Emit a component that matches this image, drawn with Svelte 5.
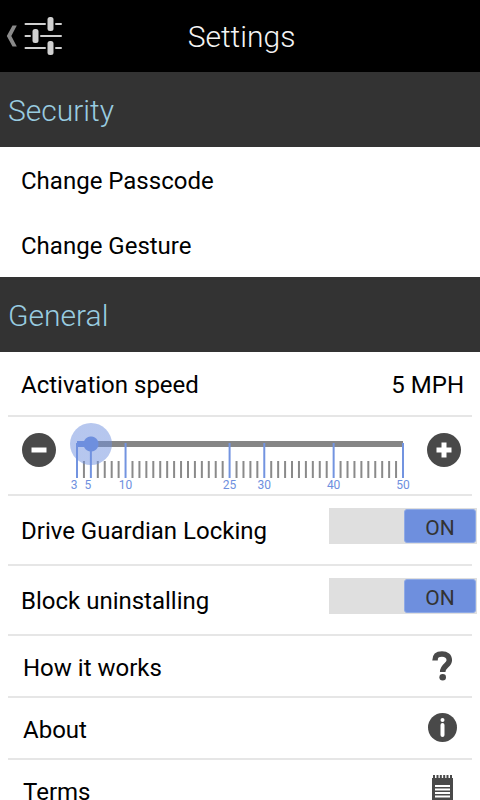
<script lang="ts">
  const min = 3;
  const max = 50;
  const labelled = [3, 5, 10, 25, 30, 40, 50];
  const marks = Array.from({ length: max - min + 1 }, (_, i) => i + min);

  let speed = $state(5);
  let locking = $state(true);
  let blockUninstall = $state(true);

  const percent = (value: number) => ((value - min) / (max - min)) * 100;

  function step(amount: number) {
    speed = Math.min(max, Math.max(min, speed + amount));
  }
</script>

{#snippet toggle(id: string, on: boolean, flip: () => void)}
  <button
    class="toggle"
    class:off={!on}
    type="button"
    role="switch"
    aria-checked={on}
    aria-labelledby={id}
    onclick={flip}
  >
    <span class="knob">{on ? "ON" : "OFF"}</span>
  </button>
{/snippet}

<div class="screen">
  <header>
    <button class="back" type="button" aria-label="Back">
      <svg width="56" height="40" viewBox="0 0 56 40">
        <path d="M6.500 9.500h4.300L5.300 20l5.500 10.500H6.500L.8 20z" fill="#8a8a8a" />
        <g stroke="#d0d0d0" stroke-width="2" stroke-linecap="round">
          <path d="M19.500 8H39M50 8h5M19.500 20H24M35 20h20M19.500 32H39M50 32h5" />
        </g>
        <g fill="#d0d0d0">
          <rect x="41.500" y="1" width="6" height="14" rx="2.500" />
          <rect x="26.500" y="13" width="6" height="14" rx="2.500" />
          <rect x="41.500" y="25" width="6" height="14" rx="2.500" />
        </g>
      </svg>
    </button>
    <h1>Settings</h1>
  </header>

  <main>
    <h2>Security</h2>
    <button class="link" type="button">Change Passcode</button>
    <button class="link" type="button">Change Gesture</button>

    <h2>General</h2>
    <div class="row speed">
      <label for="speed">Activation speed</label>
      <output for="speed">{speed} MPH</output>
    </div>

    <div class="row slider">
      <button class="step" type="button" aria-label="Slower" onclick={() => step(-1)}>
        <svg width="34" height="34" viewBox="0 0 34 34">
          <circle cx="17" cy="17" r="17" fill="#494949" />
          <path d="M9.500 17h15" stroke="#fff" stroke-width="5" />
        </svg>
      </button>
      <div class="scale">
        <svg class="ruler" height="56" aria-hidden="true">
          <rect x="0" y="5" width="100%" height="6" fill="#868686" />
          <rect x="0" y="5" width="{percent(speed)}%" height="6" fill="#6e8fde" />
          {#each marks as mark}
            {#if labelled.includes(mark)}
              <line class="major" x1="{percent(mark)}%" x2="{percent(mark)}%" y1="7" y2="42" />
              <text x="{percent(mark)}%" y="53" dx={mark < 10 ? -3 : 0}>{mark}</text>
            {:else}
              <line class="minor" x1="{percent(mark)}%" x2="{percent(mark)}%" y1="25" y2="42" />
            {/if}
          {/each}
        </svg>
        <input id="speed" type="range" {min} {max} bind:value={speed} />
      </div>
      <button class="step" type="button" aria-label="Faster" onclick={() => step(1)}>
        <svg width="34" height="34" viewBox="0 0 34 34">
          <circle cx="17" cy="17" r="17" fill="#494949" />
          <path d="M9.500 17h15M17 9.500v15" stroke="#fff" stroke-width="5" />
        </svg>
      </button>
    </div>

    <div class="row switch">
      <span id="locking">Drive Guardian Locking</span>
      {@render toggle("locking", locking, () => (locking = !locking))}
    </div>
    <div class="row switch">
      <span id="uninstall">Block uninstalling</span>
      {@render toggle("uninstall", blockUninstall, () => (blockUninstall = !blockUninstall))}
    </div>

    <button class="row info" type="button">
      <span>How it works</span>
      <svg width="30" height="30" viewBox="0 0 30 30">
        <path
          d="M8 9.500C8 4.500 10.500 3 15 3s7.300 2.300 7.300 6.300c0 5.200-6.600 5.200-6.600 11.700"
          fill="none"
          stroke="#494949"
          stroke-width="5.500"
        />
        <circle cx="15.700" cy="26.300" r="3.300" fill="#494949" />
      </svg>
    </button>
    <button class="row info" type="button">
      <span>About</span>
      <svg width="30" height="30" viewBox="0 0 30 30">
        <circle cx="15.500" cy="14.500" r="14.500" fill="#494949" />
        <circle cx="15.500" cy="7" r="2" fill="#fff" />
        <path d="M15.500 12v10" stroke="#fff" stroke-width="4" stroke-linecap="round" />
      </svg>
    </button>
    <button class="row info" type="button">
      <span>Terms</span>
      <svg width="30" height="30" viewBox="0 0 30 30">
        <path d="M5 3h21v26H5z" fill="#494949" />
        <path d="M7 0v3M10.500 0v3M13.800 0v3M17.200 0v3M20.500 0v3M24 0v3" stroke="#494949" stroke-width="2" />
        <path d="M8 11h15M8 14.500h15M8 18h15M8 21.500h15" stroke="#fff" stroke-width="2" />
      </svg>
    </button>
  </main>
</div>

<style>
  :global(body) {
    margin: 0;
    background: #fff;
  }

  .screen {
    display: flex;
    flex-direction: column;
    height: 100vh;
    font-family: Roboto, "Noto Sans", sans-serif;
    font-size: 24px;
    line-height: 32px;
    color: #000;
  }

  button {
    border: 0;
    padding: 0;
    background: none;
    color: inherit;
    font: inherit;
    cursor: pointer;
  }

  svg {
    display: block;
  }

  header {
    display: grid;
    grid-template-columns: 1fr auto 1fr;
    align-items: center;
    flex: none;
    min-height: 72px;
    padding: 0 3px 0 6px;
    box-sizing: border-box;
    background: #000;
    color: #f4f4f4;
  }

  .back {
    justify-self: start;
  }

  h1,
  h2 {
    margin: 0;
    font-size: 30px;
    font-weight: 300;
    line-height: 35px;
  }

  h2 {
    padding: 21px 8px 19px;
    background: #333;
    color: #99cce0;
  }

  main {
    flex: 1;
    min-height: 0;
    overflow-y: auto;
    scrollbar-width: none;
  }

  .link {
    display: block;
    width: 100%;
    padding: 18px 21px 15px;
    text-align: left;
  }

  .row {
    display: flex;
    align-items: center;
    justify-content: space-between;
    margin: 0 8px;
    border-bottom: 2px solid #e6e6e6;
  }

  .speed {
    padding: 17px 8px 14px 13px;
  }

  .slider {
    padding: 8px 11px 8px 14px;
    min-height: 61px;
  }

  .step {
    flex: none;
    margin-bottom: 11px;
  }

  .scale {
    position: relative;
    flex: 1;
    min-width: 0;
    padding: 10px 21px 0;
    margin: 0 3px -7px 0;
  }

  .ruler {
    width: 100%;
    overflow: visible;
  }

  .ruler line {
    stroke-width: 2px;
  }

  .major {
    stroke: #7394e0;
  }

  .minor {
    stroke: #8a8a8a;
  }

  .ruler text {
    fill: #6e8fde;
    font-size: 12px;
    text-anchor: middle;
  }

  input {
    position: absolute;
    top: -3px;
    left: 0;
    width: 100%;
    height: 42px;
    margin: 0;
    appearance: none;
    background: none;
  }

  input::-webkit-slider-thumb {
    appearance: none;
    width: 42px;
    height: 42px;
    border-radius: 50%;
    background: radial-gradient(circle, #6e8fde 7px, rgba(110, 143, 222, 0.5) 8px);
  }

  .switch {
    padding: 12px 0 12px 13px;
  }

  .switch span[id] {
    padding-top: 2px;
  }

  /* The switch reaches past the divider line. */
  .toggle {
    display: flex;
    justify-content: flex-end;
    width: 148px;
    margin: 0 -5px 8px 0;
    padding: 1px;
    box-sizing: border-box;
    background: #dfdfdf;
  }

  .toggle.off {
    justify-content: flex-start;
  }

  .knob {
    width: 70px;
    padding-top: 4px;
    border: 1px solid #8ea9e6;
    border-radius: 3px;
    background: #6e8fde;
    color: #333;
    font-size: 21px;
    line-height: 28px;
  }

  .off .knob {
    background: #bbb;
    border-color: #ccc;
  }

  .info {
    width: calc(100% - 16px);
    padding: 12px 15px;
    text-align: left;
  }

  .info span {
    padding-top: 4px;
  }
</style>
